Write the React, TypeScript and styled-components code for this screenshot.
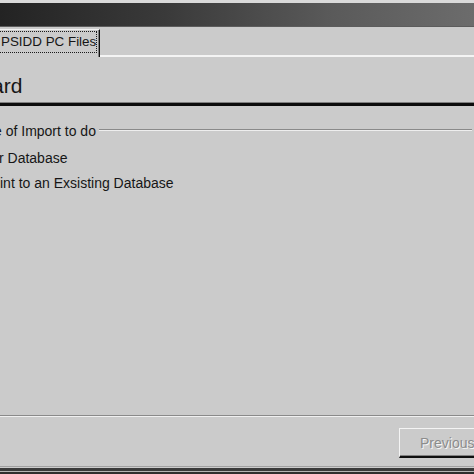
import React from 'react';
import styled, {createGlobalStyle} from 'styled-components';

const GlobalStyle = createGlobalStyle`
    html, body {
        margin: 0;
        padding: 0;
        background: #cbcbcb;
    }
`;

const font = `'Liberation Sans', Arial, sans-serif`;

const Window = styled.div`
    width: 474px;
    height: 474px;
    overflow: hidden;
    display: flex;
    flex-direction: column;
    background: #cbcbcb;
    font-family: ${font};
    color: #161616;
`;

const TopEdge = styled.div`
    height: 3px;
    background: #dadada;
`;

const TitleBar = styled.div`
    height: 23px;
    background: linear-gradient(90deg, #232323 0%, #3a3a3a 35%, #5a5a5a 70%, #6c6c6c 100%);
    border-bottom: 1px solid #5c5c5c;
`;

const TabStrip = styled.div`
    height: 30px;
    display: flex;
    align-items: flex-end;
`;

const Tab = styled.div`
    width: 100px;
    height: 28px;
    box-sizing: border-box;
    border-top: 1px solid #f2f2f2;
    border-right: 1px solid #111;
    box-shadow: inset -1px 0 #808080;
    padding: 1px 3px 4px 0;
    display: flex;
`;

const FocusRect = styled.div`
    flex: 1;
    display: flex;
    align-items: center;
    border: 1px dotted #1a1a1a;
    border-left: none;
    font-size: 13.4px;
    white-space: nowrap;
    padding-left: 1px;
    padding-bottom: 1px;
`;

const TabFiller = styled.div`
    flex: 1;
    height: 2px;
    background: #f4f4f4;
`;

const Header = styled.div`
    height: 46px;
    box-sizing: border-box;
    padding-top: 17px;
    border-bottom: 1px solid #808080;
    font-size: 21px;
    line-height: 24px;
    text-indent: -8px;
    white-space: nowrap;
`;

const HeaderRule = styled.div`
    height: 3px;
    background: #0c0c0c;
`;

const Body = styled.div`
    flex: 1;
    padding-top: 17px;
    display: flex;
    flex-direction: column;
`;

const GroupHead = styled.div`
    display: flex;
    align-items: center;
    height: 16px;
    padding-right: 2px;
    margin-bottom: 6px;
`;

const GroupLabel = styled.span`
    font-size: 14px;
    white-space: nowrap;
    text-indent: -6px;
    margin-right: 3px;
`;

const GroupLine = styled.div`
    flex: 1;
    height: 1px;
    margin-top: -2px;
    background: #8a8a8a;
    border-bottom: 1px solid #eeeeee;
`;

const Option = styled.div<{$indent: number}>`
    height: 25px;
    display: flex;
    align-items: center;
    font-size: 14px;
    white-space: nowrap;
    text-indent: ${(p) => p.$indent}px;
`;

const Footer = styled.div`
    height: 59px;
    display: flex;
    flex-direction: column;
`;

const Etched = styled.div`
    height: 1px;
    background: #8a8a8a;
    border-bottom: 1px solid #f0f0f0;
`;

const ButtonRow = styled.div`
    flex: 1;
    display: flex;
    justify-content: flex-end;
    padding-top: 11px;
`;

const Button = styled.div`
    width: 76px;
    height: 30px;
    box-sizing: border-box;
    margin-right: -1px;
    border-top: 1px solid #f4f4f4;
    border-left: 1px solid #f4f4f4;
    border-bottom: 2px solid #0e0e0e;
    box-shadow: inset 0 -1px #808080;
    padding-left: 20px;
    display: flex;
    align-items: center;
    font-size: 14px;
    color: #8c8c8c;
    text-shadow: 1px 1px 0 #f6f6f6;
`;

const BottomEdge = styled.div`
    height: 8px;
    box-sizing: border-box;
    border-top: 1px solid #a0a0a0;
    background: linear-gradient(#cbcbcb 0 1px, #3a3a3a 1px 4px, #b4b4b4 4px 5px, #2e2e2e 5px);
`;

export default function App() {
    return (
        <>
            <GlobalStyle />
            <Window>
                <TopEdge />
                <TitleBar />
                <TabStrip>
                    <Tab>
                        <FocusRect>PSIDD PC Files</FocusRect>
                    </Tab>
                    <TabFiller />
                </TabStrip>
                <Header>ard</Header>
                <HeaderRule />
                <Body>
                    <GroupHead>
                        <GroupLabel>e of Import to do</GroupLabel>
                        <GroupLine />
                    </GroupHead>
                    <Option $indent={-1}>r Database</Option>
                    <Option $indent={0}>int to an Exsisting Database</Option>
                </Body>
                <Footer>
                    <Etched />
                    <ButtonRow>
                        <Button>Previous</Button>
                    </ButtonRow>
                    <BottomEdge />
                </Footer>
            </Window>
        </>
    );
}
